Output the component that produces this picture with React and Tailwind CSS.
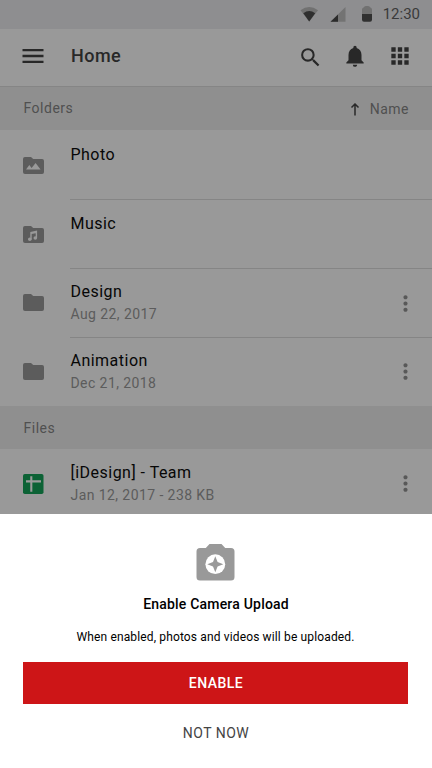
import React from 'react'
import { MdApps, MdMenu, MdMoreVert, MdNotifications, MdSearch } from 'react-icons/md'

const folders = [
  { name: 'Photo', icon: 'photo', size: 'h-[70px]', iconPad: 'pt-[27px]', textPad: 'pt-[15px]' },
  { name: 'Music', icon: 'music', size: 'h-[69px]', iconPad: 'pt-[26px]', textPad: 'pt-[14px]' },
  { name: 'Design', meta: 'Aug 22, 2017', icon: 'folder', size: 'h-[69px]', iconPad: 'pt-[25px]', textPad: 'pt-[13px]', menuPad: 'pt-[22px]' },
  { name: 'Animation', meta: 'Dec 21, 2018', icon: 'folder', size: 'h-[68px]', iconPad: 'pt-[25px]', textPad: 'pt-[13px]', menuPad: 'pt-[21px]', last: true },
]

const files = [
  { name: '[iDesign] - Team', meta: 'Jan 12, 2017 - 238 KB', icon: 'sheet', size: 'h-[65px]', iconPad: 'pt-[25px]', textPad: 'pt-[14px]', menuPad: 'pt-[22px]', last: true },
]

const FOLDER_PATH = 'M2 0h6l2.2 2.1H19a2 2 0 0 1 2 2V15a2 2 0 0 1-2 2H2a2 2 0 0 1-2-2V2a2 2 0 0 1 2-2z'

function ItemIcon({ type }) {
  if (type === 'sheet') {
    return (
      <svg width="21" height="20" viewBox="0 0 21 20">
        <rect width="20.5" height="20" rx="1.8" fill="#0c6235" />
        <path d="M3 7.4h15M8.3 2.3v15.5" stroke="#9b9b9b" strokeWidth="2.1" />
      </svg>
    )
  }
  return (
    <svg width="21" height="17" viewBox="0 0 21 17">
      <path d={FOLDER_PATH} fill="#5c5c5c" />
      {type === 'photo' && <path d="M3 12.4l3.3-4.4 2.3 2.9 4-5 5 6.5z" fill="#999" />}
      {type === 'music' && (
        <g fill="#999">
          <circle cx="6.8" cy="13.2" r="1.8" />
          <circle cx="12.3" cy="12" r="1.8" />
          <path d="M7.3 5.9l6.8-1.4v7.6h-1.4V7.2l-4 .8v5.2H7.3z" />
        </g>
      )}
    </svg>
  )
}

function Status() {
  return (
    <div className="flex h-[29px] shrink-0 items-center justify-end bg-[#8e8e90] pr-3">
      <svg width="72" height="17" viewBox="0 0 72 17" className="mr-[11px]">
        <path d="M.5 4.300Q9.200-2.300 18 4.300L9.200 15.500z" fill="#717171" />
        <path d="M3.300 7.200Q9.200 3 15.200 7.200L9.200 15.500z" fill="#2f2f2f" />
        <path d="M30.500 15.800L45.500 1v14.800z" fill="#737373" />
        <path d="M30.500 15.800L38 8.400v7.400z" fill="#2b2b2b" />
        <path d="M62 8V3.600a2 2 0 0 1 1.600-2C64.400.3 65.500 0 67 0s2.600.3 3.400 1.600a2 2 0 0 1 1.600 2V8z" fill="#717171" />
        <path d="M62 8h10v5.800a2 2 0 0 1-2 2h-6a2 2 0 0 1-2-2z" fill="#303030" />
      </svg>
      <span className="text-[15px] leading-none text-[#3a3a3a]">12:30</span>
    </div>
  )
}

function Header() {
  return (
    <header className="flex h-[58px] shrink-0 items-center border-b border-[#858585] bg-[#999] pt-px pr-[19px] pl-[19px] pb-1 text-[#282828]">
      <MdMenu size={28} preserveAspectRatio="none" />
      <h1 className="ml-6 flex-1 text-[18px] leading-none font-medium tracking-[0.45px]">Home</h1>
      <MdSearch size={25} className="mr-[19px] mt-0.5" />
      <MdNotifications size={26} className="mr-[19px]" />
      <MdApps size={26} />
    </header>
  )
}

function Section({ title, children }) {
  return (
    <div className="flex h-[43px] shrink-0 items-center justify-between bg-[#8f8f8f] pr-[23px] pl-[23.5px] text-[14px] leading-none tracking-[0.5px] text-[#505050]">
      <span className={children ? 'pb-px' : 'pt-px'}>{title}</span>
      {children}
    </div>
  )
}

function Row({ name, meta, icon, size, iconPad, textPad, menuPad, last }) {
  return (
    <div className={`flex shrink-0 pl-[23px] ${size}`}>
      <div className={`w-[47px] ${iconPad}`}>
        <ItemIcon type={icon} />
      </div>
      <div className={`flex flex-1 pl-[0.5px] ${last ? '' : 'border-b border-[#858585]'}`}>
        <div className={`flex-1 whitespace-nowrap ${textPad}`}>
          <div className="text-[16px] leading-5 tracking-[0.48px] text-[#070707]">{name}</div>
          {meta && <div className="mt-[2px] text-[14px] leading-5 tracking-[0.42px] text-[#5c5c5c]">{meta}</div>}
        </div>
        {meta && (
          <div className={`mr-[14.5px] text-[#585858] ${menuPad}`}>
            <MdMoreVert size={25} />
          </div>
        )}
      </div>
    </div>
  )
}

function CameraIcon() {
  return (
    <svg width="39" height="37" viewBox="0 0 39 37">
      <path
        d="M13.500 0h12l3.700 4H35a3.500 3.500 0 0 1 3.500 3.500v25.500a3.500 3.500 0 0 1-3.500 3.500H4A3.500 3.500 0 0 1 .5 33V7.500A3.500 3.500 0 0 1 4 4h5.800z"
        fill="#999"
      />
      <circle cx="19.300" cy="20.200" r="9.900" fill="#fff" />
      <path d="M19.300 12.200l2.300 5.700 5.700 2.300-5.700 2.300-2.300 5.700-2.300-5.700-5.700-2.300 5.700-2.300z" fill="#999" />
    </svg>
  )
}

export default function App() {
  return (
    <div className="flex h-[768px] w-[432px] flex-col overflow-hidden bg-[#999] font-['Roboto',sans-serif]">
      <Status />
      <Header />
      <Section title="Folders">
        <span className="flex items-center gap-[10px] pt-px">
          <svg width="10" height="13" viewBox="0 0 10 13" fill="none" stroke="#292929" strokeWidth="1.5">
            <path d="M5 12.500V1M1.500 4.500l3.500-3.500 3.500 3.500" />
          </svg>
          Name
        </span>
      </Section>
      <div className="flex shrink-0 flex-col">
        {folders.map(f => (
          <Row key={f.name} {...f} />
        ))}
      </div>
      <Section title="Files" />
      {files.map(f => (
        <Row key={f.name} {...f} />
      ))}

      {/* Camera upload prompt */}
      <div className="flex flex-1 flex-col items-center bg-white pt-[30px] pr-6 pl-[23px]">
        <CameraIcon />
        <h2 className="mt-[13px] pl-px text-[14px] leading-5 font-medium tracking-[0.2px] text-black">
          Enable Camera Upload
        </h2>
        <p className="mt-[13px] text-[12px] leading-5 tracking-[0.14px] text-black">
          When enabled, photos and videos will be uploaded.
        </p>
        <button className="mt-[15px] h-[42px] w-full shrink-0 bg-[#cd1517] pl-px text-[14px] font-medium tracking-[0.5px] text-white">
          ENABLE
        </button>
        <button className="mt-[19px] pl-px text-[14px] leading-5 tracking-[0.5px] text-[#444]">NOT NOW</button>
      </div>
    </div>
  )
}
